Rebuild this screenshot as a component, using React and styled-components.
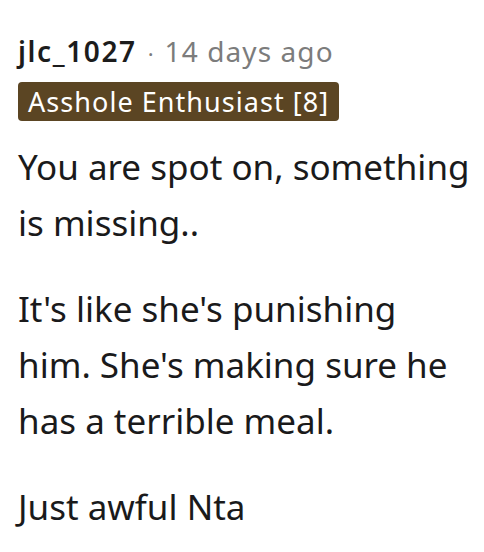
import React from 'react'
import styled, { createGlobalStyle } from 'styled-components'

const GlobalStyle = createGlobalStyle`
  body {
    margin: 0;
    background: #ffffff;
    font-family: "Noto Sans", "Open Sans", sans-serif;
  }
`

const Comment = styled.div`
  padding: 32px 8px 0 18px;
  width: 484px;
  box-sizing: border-box;
`

const Meta = styled.div`
  display: flex;
  align-items: baseline;
  font-size: 28px;
  line-height: 38px;
`

const Author = styled.span`
  font-weight: 600;
  color: #1c1c1c;
  letter-spacing: 1.6px;
`

const Dot = styled.span`
  color: #7c7c7c;
  margin: 0 11px;
  font-size: 22px;
`

const Time = styled.span`
  color: #7c7c7c;
  letter-spacing: 1.1px;
`

const Flair = styled.span`
  display: inline-block;
  margin-top: 10px;
  background: #5b4523;
  color: #ffffff;
  font-size: 27px;
  letter-spacing: 1.05px;
  line-height: 39px;
  height: 39px;
  padding: 0 10px;
  border-radius: 4px;
`

const Body = styled.div`
  margin-top: 18px;
  color: #1a1a1b;
  font-size: 35px;
  line-height: 56px;
`

const Para = styled.p`
  margin: 0 0 30px 0;
`

export default function App() {
  return (
    <>
      <GlobalStyle />
      <Comment>
        <Meta>
          <Author>jlc_1027</Author>
          <Dot>·</Dot>
          <Time>14 days ago</Time>
        </Meta>
        <Flair>Asshole Enthusiast [8]</Flair>
        <Body>
          <Para>You are spot on, something is missing..</Para>
          <Para>It's like she's punishing him. She's making sure he has a terrible meal.</Para>
          <Para>Just awful Nta</Para>
        </Body>
      </Comment>
    </>
  )
}
